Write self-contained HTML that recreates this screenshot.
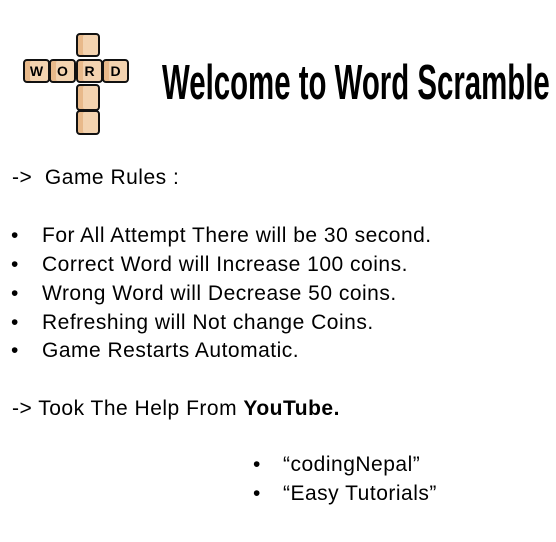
<!DOCTYPE html>
<html><head><style>
body{margin:0;width:556px;height:542px;background:#fff;position:relative;overflow:hidden;font-family:"Liberation Sans",sans-serif;color:#000}
.t{position:absolute;font-size:21px;line-height:24px;white-space:nowrap;letter-spacing:0.5px}
.b{position:absolute;font-size:21px;line-height:24px}
.tile{position:absolute;width:24px;height:24px;background:#f3d3b0;border:2.5px solid #111;border-radius:4px;box-sizing:border-box;box-shadow:inset 5px 0 0 #e8b98a;font:bold 14px "Liberation Sans",sans-serif;text-align:center;line-height:20px}
h1{position:absolute;left:162px;top:59px;margin:0;font:bold 49px/1 "Liberation Sans",sans-serif;transform-origin:left top;transform:scaleX(0.6);white-space:nowrap}
</style></head><body>
<div class="tile" style="left:76px;top:33px"></div>
<div class="tile" style="left:23px;top:59px;width:27px">W</div>
<div class="tile" style="left:49px;top:59px;width:27px">O</div>
<div class="tile" style="left:76px;top:59px;width:27px">R</div>
<div class="tile" style="left:102px;top:59px;width:27px">D</div>
<div class="tile" style="left:76px;top:84px;height:27px"></div>
<div class="tile" style="left:76px;top:110px;height:25px"></div>
<h1>Welcome to Word Scramble</h1>
<div class="t" style="left:12px;top:166px">-&gt;&nbsp; Game Rules :</div>
<div class="b" style="left:11px;top:224px">•</div><div class="t" style="left:42px;top:224px">For All Attempt There will be 30 second.</div>
<div class="b" style="left:11px;top:253px">•</div><div class="t" style="left:42px;top:253px">Correct Word will Increase 100 coins.</div>
<div class="b" style="left:11px;top:282px">•</div><div class="t" style="left:42px;top:282px">Wrong Word will Decrease 50 coins.</div>
<div class="b" style="left:11px;top:311px">•</div><div class="t" style="left:42px;top:311px">Refreshing will Not change Coins.</div>
<div class="b" style="left:11px;top:339px">•</div><div class="t" style="left:42px;top:339px">Game Restarts Automatic.</div>
<div class="t" style="left:12px;top:397px">-&gt; Took The Help From <b>YouTube.</b></div>
<div class="b" style="left:253px;top:453px">•</div><div class="t" style="left:283px;top:453px">“codingNepal”</div>
<div class="b" style="left:253px;top:482px">•</div><div class="t" style="left:283px;top:482px">“Easy Tutorials”</div>
</body></html>
